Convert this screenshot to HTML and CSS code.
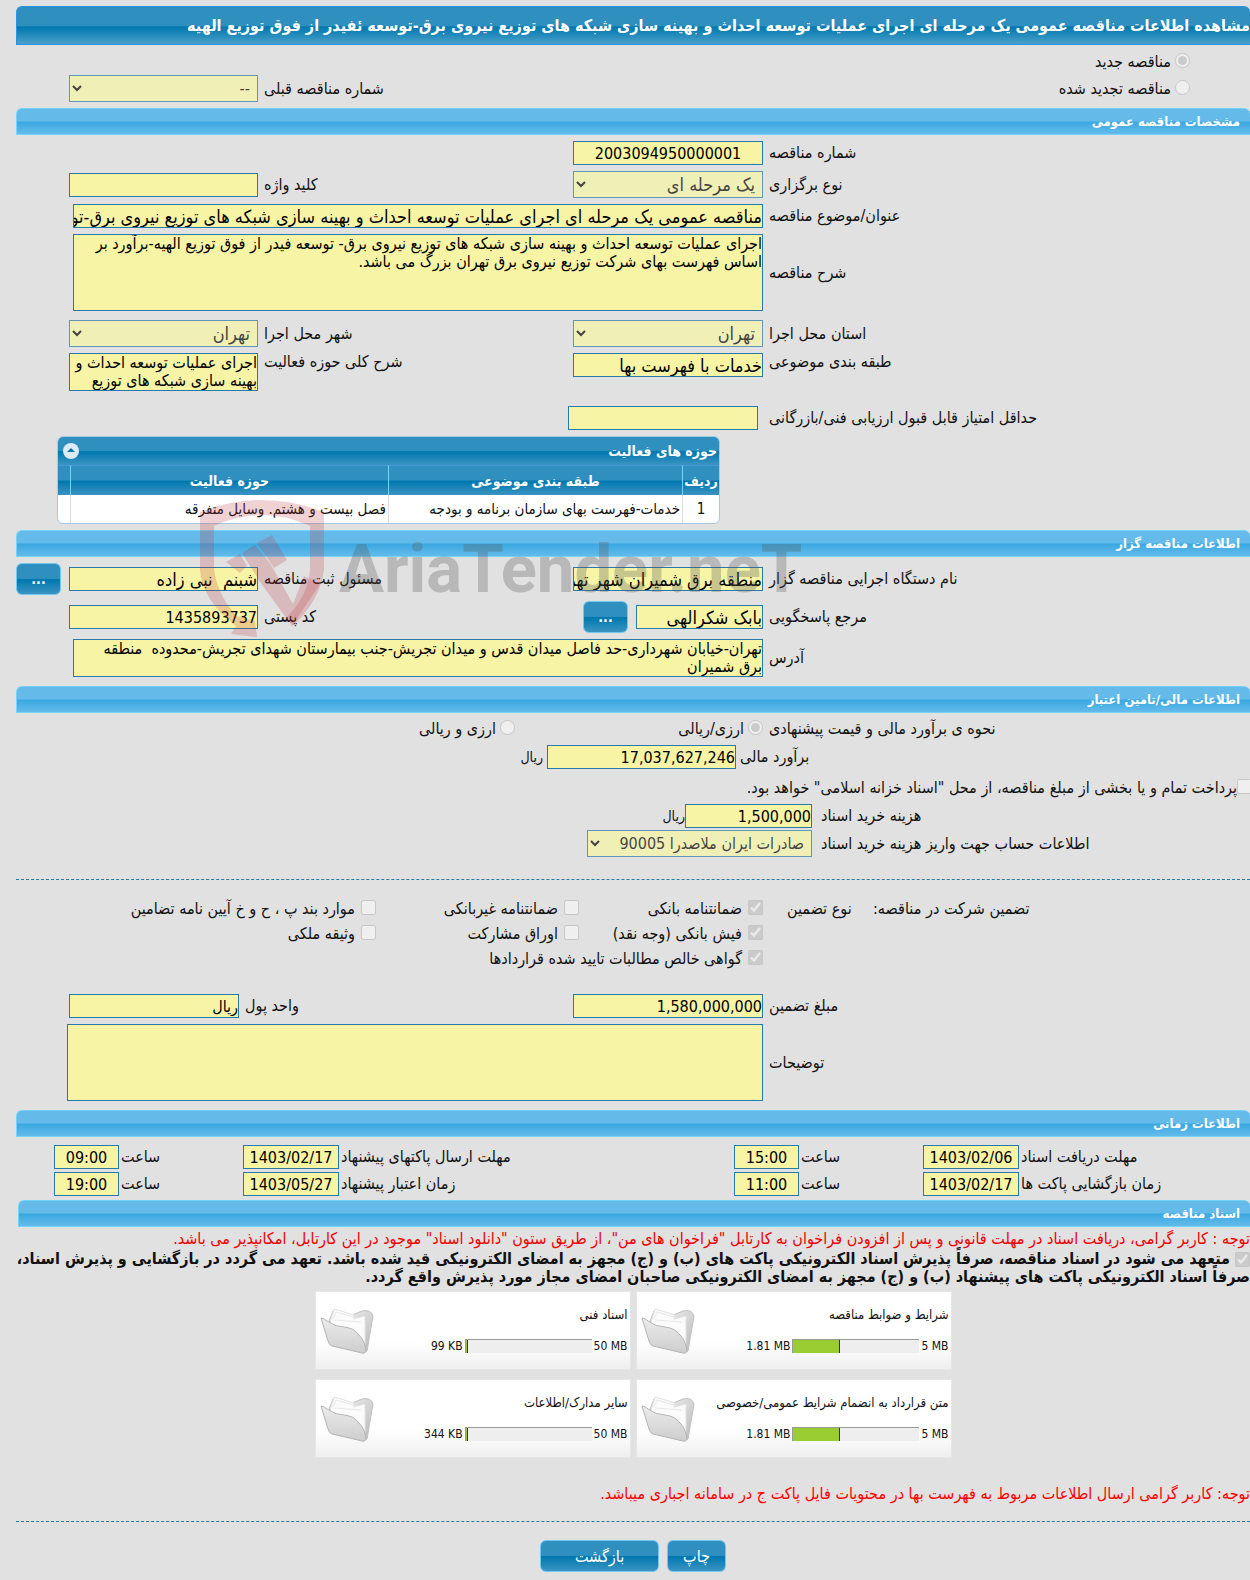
FILE: index.html
```html
<!DOCTYPE html>
<html lang="fa" dir="rtl">
<head>
    <meta charset="UTF-8">
    <meta name="viewport" content="width=device-width, initial-scale=1.0">
    <title>مشاهده اطلاعات مناقصه عمومی</title>
    <link rel="stylesheet" href="styles.css">
</head>
<body>

<svg class="sprite" aria-hidden="true">
    <defs>
        <linearGradient id="folderBack" x1="0" y1="0" x2="1" y2="1">
            <stop offset="0" stop-color="#f4f4f4"/>
            <stop offset="1" stop-color="#b9b9b9"/>
        </linearGradient>
        <linearGradient id="folderFront" x1="0" y1="0" x2="0" y2="1">
            <stop offset="0" stop-color="#ececec"/>
            <stop offset="1" stop-color="#cdcdcd"/>
        </linearGradient>
    </defs>
    <symbol id="folder" viewBox="0 0 54 48">
        <path d="M9 14 L13 4 L32 8 L42 4 Q51 2 53 9 L47 44 L43 46 Z" fill="url(#folderBack)" stroke="#c2c2c2"/>
        <path d="M10 16 L14 2 L34 8 L33 12 L45 9 L45 38 L12 30 Z" fill="#fbfbfb" stroke="#e2e2e2"/>
        <path d="M13 12 L16 5 L36 11 M14 13 L41 15" fill="none" stroke="#e8e8e8"/>
        <path d="M1 11 Q4 11 7 14 Q15 20 24 20 Q34 21 39 28 Q45 34 46 44 Q45 47 42 46 L12 39 Q9 38 8 34 Z" fill="url(#folderFront)" stroke="#b4b4b4"/>
    </symbol>
</svg>

<div class="page">
    <h1 class="title-bar">مشاهده اطلاعات مناقصه عمومی یک مرحله ای اجرای عملیات توسعه احداث و بهینه سازی شبکه های توزیع نیروی برق-توسعه ئفیدر از فوق توزیع الهیه</h1>

    <div class="row choice">
        <label class="option"><input type="radio" name="kind" checked disabled>مناقصه جدید</label>
    </div>
    <div class="row choice last">
        <label class="option"><input type="radio" name="kind" disabled>مناقصه تجدید شده</label>
        <span></span>
        <label class="label" for="prev">شماره مناقصه قبلی</label>
        <select id="prev" disabled><option>--</option></select>
    </div>

    <h2 class="section-bar">مشخصات مناقصه عمومی</h2>
    <div class="row">
        <label class="label" for="number">شماره مناقصه</label>
        <input class="center" type="text" id="number" value="2003094950000001" readonly>
    </div>
    <div class="row">
        <label class="label" for="holding">نوع برگزاری</label>
        <select class="words" id="holding" disabled><option>یک مرحله ای</option></select>
        <label class="label" for="keyword">کلید واژه</label>
        <input type="text" id="keyword" readonly>
    </div>
    <div class="row wide">
        <label class="label" for="subject">عنوان/موضوع مناقصه</label>
        <input class="words" type="text" id="subject" value="مناقصه عمومی یک مرحله ای اجرای عملیات توسعه احداث و بهینه سازی شبکه های توزیع نیروی برق-توسعه فیدر از فوق توزیع الهیه" readonly>
    </div>
    <div class="row wide">
        <label class="label" for="desc">شرح مناقصه</label>
        <textarea class="tall" id="desc" readonly>اجرای عملیات توسعه احداث و بهینه سازی شبکه های توزیع نیروی برق- توسعه فیدر از فوق توزیع الهیه-برآورد بر اساس فهرست بهای شرکت توزیع نیروی برق تهران بزرگ می باشد.</textarea>
    </div>
    <div class="row spaced">
        <label class="label" for="province">استان محل اجرا</label>
        <select class="words" id="province" disabled><option>تهران</option></select>
        <label class="label" for="city">شهر محل اجرا</label>
        <select class="words" id="city" disabled><option>تهران</option></select>
    </div>
    <div class="row top">
        <label class="label" for="category">طبقه بندی موضوعی</label>
        <input class="words" type="text" id="category" value="خدمات با فهرست بها" readonly>
        <label class="label" for="field">شرح کلی حوزه فعالیت</label>
        <textarea id="field" readonly>اجرای عملیات توسعه احداث و بهینه سازی شبکه های توزیع</textarea>
    </div>
    <div class="row score">
        <label class="label" for="score">حداقل امتیاز قابل قبول ارزیابی فنی/بازرگانی</label>
        <input type="text" id="score" readonly>
    </div>

    <div class="activity">
        <div class="activity-box">
            <div class="activity-head">
                <span>حوزه های فعالیت</span>
                <button type="button" class="collapse" aria-label="بستن">
                    <svg viewBox="0 0 16 16"><circle cx="8" cy="8" r="8" fill="#dcebf9"/><path d="M4 9 L8 5 L12 9 Z" fill="#0078ae"/></svg>
                </button>
            </div>
            <table>
                <thead>
                    <tr><th class="c-row">ردیف</th><th class="c-cat">طبقه بندی موضوعی</th><th>حوزه فعالیت</th><th class="c-last"></th></tr>
                </thead>
                <tbody>
                    <tr><td class="center">1</td><td>خدمات-فهرست بهای سازمان برنامه و بودجه</td><td>فصل بیست و هشتم. وسایل متفرقه</td><td></td></tr>
                </tbody>
            </table>
        </div>
    </div>

    <h2 class="section-bar">اطلاعات مناقصه گزار</h2>
    <div class="row owner">
        <label class="label" for="org">نام دستگاه اجرایی مناقصه گزار</label>
        <input class="words" type="text" id="org" value="منطقه برق شمیران شهر تهران" readonly>
        <label class="label" for="registrar">مسئول ثبت مناقصه</label>
        <input class="words" type="text" id="registrar" value="شبنم  نبی زاده" readonly>
        <button type="button" class="btn more">...</button>
    </div>
    <div class="row owner">
        <label class="label" for="contact">مرجع پاسخگویی</label>
        <div class="with-button">
            <input class="words" type="text" id="contact" value="بابک شکرالهی" readonly>
            <button type="button" class="btn more">...</button>
        </div>
        <label class="label" for="postal">کد پستی</label>
        <input type="text" id="postal" value="1435893737" readonly>
    </div>
    <div class="row wide">
        <label class="label" for="address">آدرس</label>
        <textarea id="address" readonly>تهران-خیابان شهرداری-حد فاصل میدان قدس و میدان تجریش-جنب بیمارستان شهدای تجریش-محدوده  منطقه
برق شمیران</textarea>
    </div>

    <h2 class="section-bar spaced">اطلاعات مالی/تامین اعتبار</h2>
    <div class="row method">
        <span class="label">نحوه ی برآورد مالی و قیمت پیشنهادی</span>
        <label class="option"><input type="radio" name="currency" checked disabled>ارزی/ریالی</label>
        <label class="option"><input type="radio" name="currency" disabled>ارزی و ریالی</label>
    </div>
    <div class="row estimate">
        <label class="label" for="estimate">برآورد مالی</label>
        <input type="text" id="estimate" value="17,037,627,246" readonly>
        <span class="unit">ریال</span>
    </div>
    <div class="treasury">
        <label class="option"><input type="checkbox" disabled>پرداخت تمام و یا بخشی از مبلغ مناقصه، از محل "اسناد خزانه اسلامی" خواهد بود.</label>
    </div>
    <div class="row docs-cost">
        <label class="label" for="cost">هزینه خرید اسناد</label>
        <input type="text" id="cost" value="1,500,000" readonly>
        <span>ریال</span>
    </div>
    <div class="row docs-account">
        <label class="label" for="account">اطلاعات حساب جهت واریز هزینه خرید اسناد</label>
        <select id="account" disabled><option>صادرات ایران ملاصدرا 90005</option></select>
    </div>

    <hr class="divider">

    <div class="guarantee">
        <span class="label">تضمین شرکت در مناقصه:</span>
        <span class="label type">نوع تضمین</span>
        <label class="option"><input type="checkbox" checked disabled>ضمانتنامه بانکی</label>
        <label class="option"><input type="checkbox" disabled>ضمانتنامه غیربانکی</label>
        <label class="option"><input type="checkbox" disabled>موارد بند پ ، ح و خ آیین نامه تضامین</label>
        <label class="option first"><input type="checkbox" checked disabled>فیش بانکی (وجه نقد)</label>
        <label class="option"><input type="checkbox" disabled>اوراق مشارکت</label>
        <label class="option"><input type="checkbox" disabled>وثیقه ملکی</label>
        <label class="option first long"><input type="checkbox" checked disabled>گواهی خالص مطالبات تایید شده قراردادها</label>
    </div>

    <div class="row amount">
        <label class="label" for="amount">مبلغ تضمین</label>
        <input type="text" id="amount" value="1,580,000,000" readonly>
        <label class="label" for="unit">واحد پول</label>
        <input type="text" id="unit" value="ریال" readonly>
    </div>
    <div class="row notes">
        <label class="label" for="notes">توضیحات</label>
        <textarea class="tall" id="notes" readonly></textarea>
    </div>

    <h2 class="section-bar spaced">اطلاعات زمانی</h2>
    <div class="times">
        <label class="label" for="d1">مهلت دریافت اسناد</label>
        <input type="text" id="d1" value="1403/02/06" readonly>
        <label class="label" for="t1">ساعت</label>
        <input type="text" id="t1" value="15:00" readonly>
        <label class="label" for="d2">مهلت ارسال پاکتهای پیشنهاد</label>
        <input type="text" id="d2" value="1403/02/17" readonly>
        <label class="label" for="t2">ساعت</label>
        <input type="text" id="t2" value="09:00" readonly>
        <span></span>
        <label class="label" for="d3">زمان بازگشایی پاکت ها</label>
        <input type="text" id="d3" value="1403/02/17" readonly>
        <label class="label" for="t3">ساعت</label>
        <input type="text" id="t3" value="11:00" readonly>
        <label class="label" for="d4">زمان اعتبار پیشنهاد</label>
        <input type="text" id="d4" value="1403/05/27" readonly>
        <label class="label" for="t4">ساعت</label>
        <input type="text" id="t4" value="19:00" readonly>
    </div>

    <h2 class="section-bar docs">اسناد مناقصه</h2>
    <p class="notice">توجه : کاربر گرامی، دریافت اسناد در مهلت قانونی و پس از افزودن فراخوان به کارتابل "فراخوان های من"، از طریق ستون "دانلود اسناد" موجود در این کارتابل، امکانپذیر می باشد.</p>
    <label class="commit"><input type="checkbox" checked disabled> متعهد می شود در اسناد مناقصه، صرفاً پذیرش اسناد الکترونیکی پاکت های (ب) و (ج) مجهز به امضای الکترونیکی قید شده باشد. تعهد می گردد در بازگشایی و پذیرش اسناد، صرفاً اسناد الکترونیکی پاکت های پیشنهاد (ب) و (ج) مجهز به امضای الکترونیکی صاحبان امضای مجاز مورد پذیرش واقع گردد.</label>

    <div class="files">
        <div class="file">
            <div class="file-info">
                <span>شرایط و ضوابط مناقصه</span>
                <div class="usage"><span dir="ltr">5 MB</span><div class="meter"><div class="fill" style="width: 37%"></div></div><span dir="ltr">1.81 MB</span></div>
            </div>
            <svg class="folder"><use href="#folder"/></svg>
        </div>
        <div class="file">
            <div class="file-info">
                <span>اسناد فنی</span>
                <div class="usage"><span dir="ltr">50 MB</span><div class="meter"><div class="fill" style="width: 2%"></div></div><span dir="ltr">99 KB</span></div>
            </div>
            <svg class="folder"><use href="#folder"/></svg>
        </div>
        <div class="file">
            <div class="file-info">
                <span>متن قرارداد به انضمام شرایط عمومی/خصوصی</span>
                <div class="usage"><span dir="ltr">5 MB</span><div class="meter"><div class="fill" style="width: 37%"></div></div><span dir="ltr">1.81 MB</span></div>
            </div>
            <svg class="folder"><use href="#folder"/></svg>
        </div>
        <div class="file">
            <div class="file-info">
                <span>سایر مدارک/اطلاعات</span>
                <div class="usage"><span dir="ltr">50 MB</span><div class="meter"><div class="fill" style="width: 2%"></div></div><span dir="ltr">344 KB</span></div>
            </div>
            <svg class="folder"><use href="#folder"/></svg>
        </div>
    </div>

    <p class="notice warn">توجه: کاربر گرامی ارسال اطلاعات مربوط به فهرست بها در محتویات فایل پاکت ج در سامانه اجباری میباشد.</p>
    <hr class="divider end">
    <div class="actions">
        <button type="button" class="btn">چاپ</button>
        <button type="button" class="btn back">بازگشت</button>
    </div>

    <!-- watermark over the form -->
    <div class="watermark" dir="ltr" aria-hidden="true">
        <svg viewBox="0 0 124 138">
            <path d="M0 12 Q62 -12 124 12 V70 Q120 100 93 126 L88 116 Q109 94 110 68 V26 Q62 4 14 26 V68 Q16 92 36 116 L55 121 L57 137 L31 134 L36 126 Q2 100 0 70 Z"/>
            <path d="M26 62 L40 54 L47 66 L40 73 Z M42 53 L55 45 L70 63 L93 104 L104 76 L120 84 L92 126 L60 82 Z M57 43 L72 35 L87 60 L74 68 Z"/>
        </svg>
        <span>AriaTender.neT</span>
    </div>
</div>

</body>
</html>
```
FILE: styles.css
```css
* {
    box-sizing: border-box;
}
body {
    margin: 0;
    padding: 6px 0 6px 16px;
    background: #e1e1e1;
    color: #111;
    font-family: "DejaVu Sans Condensed", "DejaVu Sans", sans-serif;
    font-size: 16px;
    line-height: 18px;
    overflow-x: hidden;
}
.sprite {
    position: absolute;
    width: 0;
    height: 0;
}
.page {
    position: relative;
}
.title-bar {
    margin: 0;
    height: 39px;
    border: 1px solid #2694e8;
    border-right: 0;
    border-radius: 6px 6px 0 0;
    background: linear-gradient(#2f8fbf, #2f8fbf 50%, #0078ae 54%, #4a9fc9);
    color: #fff;
    font-size: 16px;
    line-height: 37px;
    white-space: nowrap;
}
.section-bar {
    margin: 6px 0 0;
    height: 27px;
    padding-right: 10px;
    border: 1px solid #74d3f8;
    border-right: 0;
    border-radius: 6px 6px 0 0;
    background: linear-gradient(#64bbea, #64bbea 48%, #3aa8e1 52%, #64bbea);
    color: #fff;
    font-size: 13px;
    line-height: 25px;
}
.section-bar.spaced {
    margin-top: 9px;
}
.section-bar.docs {
    margin: 4px 0 0 2px;
}

/* form rows: label, field, label, field, free space */
.row {
    display: grid;
    grid-template-columns: 487fr 190fr 315fr 189fr 53fr;
    align-items: center;
    margin-top: 6px;
}
.row > *,
.times > * {
    min-width: 0;
}
.row.wide {
    grid-template-columns: 487fr 690fr 57fr;
}
.row.spaced {
    margin-top: 9px;
}
.row.top {
    align-items: start;
}
.row.score {
    grid-template-columns: 487fr 5fr 190fr 552fr;
    margin-top: 15px;
}
.row.score input {
    grid-column: 3;
}
.row.owner {
    min-height: 32px;
}
.row.notes {
    grid-template-columns: 487fr 696fr 51fr;
}
.row.amount {
    grid-template-columns: 487fr 190fr 334fr 170fr 53fr;
    margin-top: 23px;
}
.row.method {
    grid-template-columns: 487fr 248fr 499fr;
    min-height: 26px;
    margin-top: 3px;
}
.row.estimate {
    grid-template-columns: 514fr 189fr 531fr;
    margin-top: 3px;
}
.row.docs-cost {
    grid-template-columns: 438fr 127fr 669fr;
    margin-top: 3px;
}
.row.docs-account {
    grid-template-columns: 438fr 225fr 571fr;
    margin-top: 2px;
}
.docs-cost .label,
.docs-account .label {
    padding-left: 9px;
}
.docs-cost span,
.estimate span {
    font-size: 14px;
}
.estimate .label {
    padding-left: 4px;
}
.row.choice {
    height: 27px;
    margin-top: 3px;
}
.row.choice.last {
    margin-top: 0;
}
.choice .option {
    padding-right: 60px;
}
.label {
    padding-left: 6px;
    text-align: left;
    white-space: nowrap;
}
.option {
    display: flex;
    align-items: flex-start;
    gap: 4px;
    white-space: nowrap;
}
.unit {
    padding-right: 4px;
}
.center {
    text-align: center !important;
}

input[type="text"],
textarea,
select {
    display: block;
    width: 100%;
    margin: 0;
    border: 1px solid #2779aa;
    border-radius: 0;
    background-color: #f7f5a5;
    color: #000;
    font-family: inherit;
}
input[type="text"] {
    height: 24px;
    padding: 0;
    font-size: 16px;
}
select {
    height: 27px;
    padding: 0 3px 0 7px;
    font-size: 16px;
}
select:disabled {
    opacity: 0.7;
    color: #000;
}
input[type="text"].words,
select.words {
    font-size: 18px;
}
textarea {
    height: 38px;
    padding: 0;
    font-size: 16px;
    line-height: 18px;
    resize: none;
    overflow: hidden;
}
textarea.tall {
    height: 77px;
}
input[type="radio"],
input[type="checkbox"] {
    flex: none;
    width: 15px;
    height: 15px;
    margin: 0;
}

.activity {
    display: grid;
    grid-template-columns: 530fr 663fr 41fr;
    margin-top: 6px;
}
.activity-box {
    grid-column: 2;
    border: 1px solid #a6c9e2;
    border-radius: 6px;
    background: #fff;
    overflow: hidden;
}
.activity-head {
    display: flex;
    align-items: center;
    justify-content: space-between;
    height: 28px;
    padding: 0 2px 0 5px;
    background: linear-gradient(#2f8fbf, #2f8fbf 48%, #0078ae 52%, #3b94c2);
    color: #fff;
    font-size: 14px;
    font-weight: bold;
}
.collapse {
    width: 16px;
    height: 16px;
    padding: 0;
    border: 0;
    background: none;
}
.collapse svg {
    display: block;
}
.activity table {
    width: 100%;
    border-spacing: 0;
    table-layout: fixed;
}
.activity th {
    height: 30px;
    padding: 0;
    border-top: 1px solid #4297d7;
    border-left: 1px solid #74d3f8;
    background: linear-gradient(#2f8fbf, #2f8fbf 48%, #0078ae 52%, #3b94c2);
    color: #fff;
    font-size: 14px;
}
.activity td {
    height: 28px;
    padding: 0 2px;
    border-left: 1px solid #ddd;
    font-size: 15px;
    white-space: nowrap;
}
.activity th:last-child,
.activity td:last-child {
    border-left: 0;
}
.c-row {
    width: 37px;
}
.c-cat {
    width: 44.5%;
}
.c-last {
    width: 12px;
}

.btn {
    height: 32px;
    padding: 0 15px;
    border: 1px solid #74c7ee;
    border-radius: 6px;
    background: linear-gradient(#2f8fbf, #2f8fbf 48%, #0078ae 52%, #3b94c2);
    color: #fff;
    font-family: inherit;
    font-size: 16px;
}
.btn.more {
    flex: none;
    justify-self: end;
    width: 45px;
    padding: 0;
    font-size: 14px;
    font-weight: bold;
}
.with-button {
    display: flex;
    align-items: center;
    gap: 8px;
    padding-left: 10px;
}

.treasury {
    display: flex;
    align-items: center;
    height: 32px;
    margin: 3px -2px 0 0;
}
.treasury + .row {
    margin-top: 0;
}
.treasury .option {
    gap: 0;
}
.divider {
    margin: 22px 0 16px;
    border: 0;
    border-top: 1px dashed #2779aa;
}
.guarantee {
    display: grid;
    grid-template-columns: 377fr 110fr 184fr 203fr 360fr;
    grid-auto-rows: 25px;
    align-items: center;
}
.guarantee .label {
    padding-left: 0;
}
.guarantee .type {
    padding-left: 24px;
}
.guarantee .option {
    gap: 6px;
}
.guarantee .first {
    grid-column-start: 3;
}
.guarantee .long {
    grid-column-end: span 3;
}

.times {
    display: grid;
    grid-template-columns: 231fr 96fr 124fr 65fr 395fr 96fr 124fr 65fr 38fr;
    align-items: center;
    gap: 3px 0;
    margin-top: 8px;
}
.times .label {
    padding-left: 2px;
}
.times input[type="text"] {
    text-align: center;
}

.notice {
    margin: 3px 0 0;
    color: #e00;
}
.commit {
    display: block;
    margin-top: 2px;
    font-weight: bold;
}
.commit input[type="checkbox"] {
    vertical-align: middle;
}
.files {
    display: grid;
    grid-template-columns: 316px 316px;
    gap: 9px 5px;
    justify-content: center;
    margin-top: 5px;
}
.file {
    display: flex;
    align-items: center;
    justify-content: space-between;
    height: 79px;
    padding: 0 2px 0 4px;
    border: 1px solid #e6e6e6;
    background: linear-gradient(#fff 65%, #efefef);
    font-size: 13px;
}
.file-info {
    display: flex;
    flex-direction: column;
    gap: 13px;
}
.usage {
    display: flex;
    align-items: center;
    gap: 2px;
    font-size: 12px;
}
.meter {
    display: flex;
    justify-content: flex-end;
    width: 127px;
    height: 14px;
    border-top: 1px solid #999;
    border-left: 1px solid #999;
    background: #eee;
}
.fill {
    border-right: 1px solid #333;
    background: #9acd32;
}
.folder {
    width: 54px;
    height: 48px;
}
.notice.warn {
    margin-top: 27px;
    color: #f00;
}
.divider.end {
    margin: 18px 0;
}
.actions {
    display: flex;
    justify-content: center;
    gap: 8px;
}
.btn.back {
    width: 119px;
}

.watermark {
    position: absolute;
    top: 494px;
    left: 184px;
    display: flex;
    align-items: center;
    gap: 15px;
    pointer-events: none;
}
.watermark svg {
    width: 124px;
    height: 138px;
    fill: rgba(190, 50, 60, 0.22);
}
.watermark span {
    color: rgba(90, 90, 90, 0.3);
    font-family: "Liberation Sans Narrow", Roboto, sans-serif;
    font-size: 67px;
    font-weight: bold;
    line-height: 80px;
}
```
